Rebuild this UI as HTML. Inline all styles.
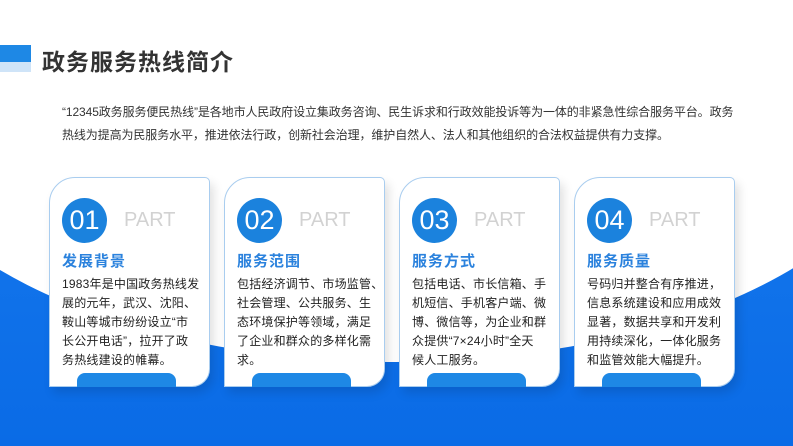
<!DOCTYPE html>
<html><head><meta charset="utf-8"><style>
*{margin:0;padding:0;box-sizing:border-box}
body{width:793px;height:446px;overflow:hidden;position:relative;background:#0a6fe8;font-family:"Liberation Sans","Noto Sans CJK SC",sans-serif}
.bg{position:absolute;left:0;top:0;width:793px;height:446px;background:linear-gradient(180deg,#1a7ef0 0%,#0a6be6 100%)}
.ell{position:absolute;left:-125px;top:-164px;width:1040px;height:526px;border-radius:50%;background:#fff}
.top{position:absolute;left:0;top:0;width:793px;height:120px;background:#fff}
.bar1{position:absolute;left:0;top:45px;width:31px;height:17px;background:#1e88e5}
.bar2{position:absolute;left:0;top:62px;width:31px;height:10px;background:#cfe4f8}
h1{position:absolute;left:42px;top:43px;font-size:23px;font-weight:bold;color:#333;letter-spacing:1px}
.p{position:absolute;left:62px;top:101px;font-size:12px;line-height:23px;color:#333;letter-spacing:-0.1px;white-space:nowrap}
.card{position:absolute;top:177px;width:161px;height:210px;background:#fff;border:1px solid #a9cdef;border-radius:26px 5px 18px 0;box-shadow:4px 6px 10px rgba(0,0,0,.12)}
.c{position:absolute;left:12px;top:20px;width:45px;height:45px;border-radius:50%;background:#1b82dd;color:#fff;font-size:27px;text-align:center;line-height:45px}
.part{position:absolute;left:74px;top:31px;font-size:20px;color:#d2d2d2}
.t{position:absolute;left:12px;top:72px;font-size:15px;font-weight:bold;color:#2b82dd;letter-spacing:1px}
.b{position:absolute;left:12px;top:97px;font-size:12px;line-height:19px;color:#222;white-space:nowrap;letter-spacing:0.2px}
.tab{position:absolute;left:27px;bottom:-1px;width:99px;height:14px;background:#1e88e5;border-radius:8px 8px 0 0}
</style></head><body>
<div class="bg"></div><div class="ell"></div><div class="top"></div>
<div class="bar1"></div><div class="bar2"></div>
<h1>政务服务热线简介</h1>
<div class="p">“12345政务服务便民热线”是各地市人民政府设立集政务咨询、民生诉求和行政效能投诉等为一体的非紧急性综合服务平台。政务<br>热线为提高为民服务水平，推进依法行政，创新社会治理，维护自然人、法人和其他组织的合法权益提供有力支撑。</div>
<div class="card" style="left:49px"><div class="c">01</div><div class="part">PART</div><div class="t">发展背景</div><div class="b">1983年是中国政务热线发<br>展的元年，武汉、沈阳、<br>鞍山等城市纷纷设立“市<br>长公开电话”，拉开了政<br>务热线建设的帷幕。</div><div class="tab"></div></div>
<div class="card" style="left:224px"><div class="c">02</div><div class="part">PART</div><div class="t">服务范围</div><div class="b">包括经济调节、市场监管、<br>社会管理、公共服务、生<br>态环境保护等领域，满足<br>了企业和群众的多样化需<br>求。</div><div class="tab"></div></div>
<div class="card" style="left:399px"><div class="c">03</div><div class="part">PART</div><div class="t">服务方式</div><div class="b">包括电话、市长信箱、手<br>机短信、手机客户端、微<br>博、微信等，为企业和群<br>众提供“7×24小时”全天<br>候人工服务。</div><div class="tab"></div></div>
<div class="card" style="left:574px"><div class="c">04</div><div class="part">PART</div><div class="t">服务质量</div><div class="b">号码归并整合有序推进，<br>信息系统建设和应用成效<br>显著，数据共享和开发利<br>用持续深化，一体化服务<br>和监管效能大幅提升。</div><div class="tab"></div></div>
</body></html>
